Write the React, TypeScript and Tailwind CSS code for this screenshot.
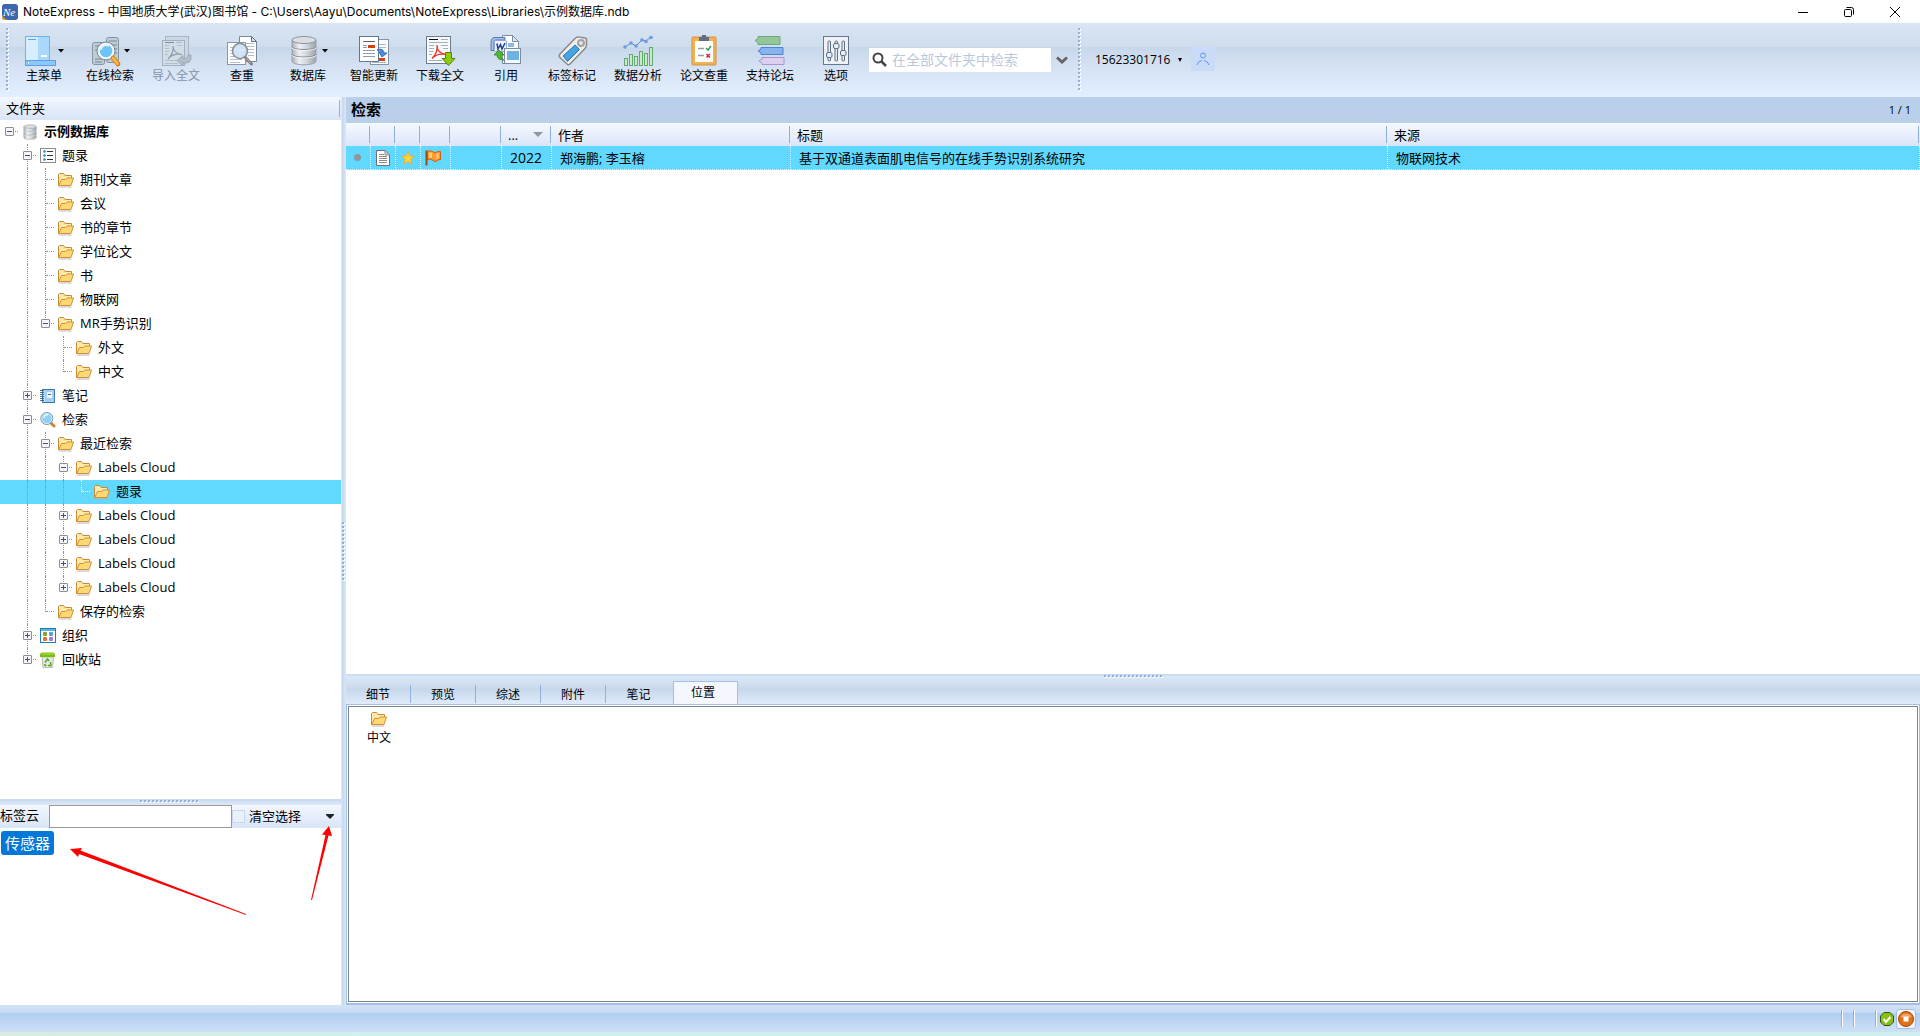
import React from "react";
import clsx from "clsx";

interface ToolItem {
    label: string;
    icon: React.ReactNode;
    hasMenu?: boolean;
    disabled?: boolean;
}

interface TreeRow {
    label: string;
    level: number;
    icon: "db" | "list" | "folder" | "note" | "search" | "group" | "trash";
    toggle?: "open" | "closed";
    // One entry per ancestor column, true when the guide runs through the row
    guides: boolean[];
    last?: boolean;
    selected?: boolean;
    bold?: boolean;
}

const Icon = ({ children }: { children: React.ReactNode }) => (
    <svg viewBox="0 0 32 32" className="size-8 shrink-0" aria-hidden="true">{children}</svg>
);

const SmallIcon = ({ children }: { children: React.ReactNode }) => (
    <svg viewBox="0 0 16 16" className="size-4 shrink-0" aria-hidden="true">{children}</svg>
);

/* Toolbar icons */

const MainMenuIcon = () => (
    <Icon>
        <rect x="1.5" y="1.5" width="24" height="24" fill="#d6eefd" stroke="#6fb3ee" />
        <rect x="14" y="2" width="11" height="23" fill="#a9d8fb" />
        <path d="M4 4.500h8" stroke="#5aa7e6" />
        <rect x="17" y="20" width="6" height="2" fill="#fff" />
        <rect x="1.5" y="25.5" width="30" height="5" fill="#8cc8fb" stroke="#5a9fe6" />
        <circle cx="4.500" cy="28" r="1.200" fill="#fff" stroke="#4f8fd8" strokeWidth=".5" />
    </Icon>
);

const OnlineSearchIcon = () => (
    <Icon>
        <rect x="2.500" y="7.500" width="12" height="22" rx="2" fill="#bfccd6" stroke="#87939f" />
        <rect x="16.500" y="2.500" width="12" height="25" rx="2" fill="#bfccd6" stroke="#87939f" />
        <path d="M5 11h7M5 15h4M5 24h7M5 27h7M19 6h8M22 10h5M24 14h3M24 18h3" stroke="#7a8793" />
        <circle cx="16" cy="16" r="7.500" fill="#6cc3f5" stroke="#f2f6f9" strokeWidth="2.500" />
        <circle cx="16" cy="16" r="9" fill="none" stroke="#75889a" strokeWidth="1" />
        <path d="M11 15a5 5 0 0 1 8-4" stroke="#dff3fd" strokeWidth="2" fill="none" />
        <path d="M23 23l5 6" stroke="#c97c16" strokeWidth="4.500" strokeLinecap="round" />
        <path d="M23 23l4.500 5.500" stroke="#ffb440" strokeWidth="3" strokeLinecap="round" />
    </Icon>
);

const ImportIcon = () => (
    <Icon>
        <rect x="5.500" y="1.500" width="23" height="25" fill="#ccd7e4" stroke="#a9b5c2" />
        <rect x="2.500" y="5.500" width="22" height="25" fill="#d3dde8" stroke="#a4b0be" />
        <path d="M5 7.500h9" stroke="#808d9c" />
        <path d="M5 10.500h4M5 13.500h4M5 16.500h4M5 19.500h3M5 25.500h13M5 28.500h13M16 7.500h6M17 10.500h5" stroke="#b3bfcc" />
        <path d="M13 11c0 4 3 8 9 8.500c-5-1-10 0-14 4.500c4-4 6-8 5-13z" fill="none" stroke="#919dac" strokeWidth="1.200" />
        <path d="M17 25.500l6-5v3h3q2-1 2-3.500h3v4q-1 4-5 4h-3v3z" fill="#b3becb" stroke="#9da9b8" />
    </Icon>
);

const CheckDupIcon = () => (
    <Icon>
        <path d="M13.500 1.500h12l5 5v20h-17z" fill="#fff" stroke="#76869b" />
        <path d="M25.500 1.500v5h5z" fill="#dbe5ef" stroke="#5f6e82" />
        <path d="M17 8.500h11M17 11.500h11M17 14.500h11M20 17.500h8M22 20.500h6" stroke="#b4bfcc" />
        <rect x="1.500" y="7.500" width="18" height="22" fill="#fff" stroke="#8a98ab" />
        <path d="M4 12.500h5M4 15.500h3M4 18.500h3M4 21.500h5M4 24.500h12M4 27.500h10" stroke="#b4bfcc" />
        <circle cx="14" cy="16" r="7.500" fill="#c6e0f8" fillOpacity=".9" stroke="#8b8c90" strokeWidth="1.500" />
        <path d="M8 15h12M14 9v14" stroke="#dcecfb" />
        <path d="M19.500 22.500l6 6.500" stroke="#7d7f84" strokeWidth="3" strokeLinecap="round" />
        <path d="M20 22.500l5 6" stroke="#c9ae98" strokeWidth="1" />
    </Icon>
);

const DatabaseShape = () => (
    <>
        <defs>
            <linearGradient id="dbMetal" x1="0" x2="1">
                <stop offset="0" stopColor="#a9b0b7" />
                <stop offset=".3" stopColor="#eef1f3" />
                <stop offset=".6" stopColor="#d2d7db" />
                <stop offset="1" stopColor="#9ba3ab" />
            </linearGradient>
        </defs>
        <path d="M4 5v21c0 5 24 5 24 0V5z" fill="url(#dbMetal)" stroke="#9aa2aa" />
        <path d="M4 11.500c0 4 24 4 24 0M4 19c0 4 24 4 24 0" fill="none" stroke="#7d8790" />
        <path d="M4 12.500c0 4 24 4 24 0M4 20c0 4 24 4 24 0" fill="none" stroke="#f5f7f8" />
        <ellipse cx="16" cy="5" rx="12" ry="3.500" fill="#dadee2" stroke="#8d959d" />
    </>
);

const SmartUpdateIcon = () => (
    <Icon>
        <rect x="12.500" y="4.500" width="18" height="25" fill="#fff" stroke="#8593a6" />
        <rect x="21" y="23" width="6" height="3" fill="#d8400f" />
        <path d="M21 9.500h7M21 12.500h7M14 27.500h14" stroke="#a9b7ca" />
        <rect x="1.500" y="1.500" width="19" height="25" fill="#fff" stroke="#66768c" />
        <path d="M5 6.500h12" stroke="#51627a" />
        <path d="M5 10.500h4M5 12.500h4M5 15.500h12M5 18.500h12M5 21.500h12" stroke="#8a9cb6" />
        <rect x="10" y="10" width="7" height="3" fill="#d8400f" />
        <path d="M19 15c4-2 7 0 7 3h3l-5 4-3-5h2c0-2-2-2-4-2z" fill="#4f90d9" stroke="#2f6fc0" />
    </Icon>
);

const DownloadIcon = () => (
    <Icon>
        <rect x="2.500" y="1.500" width="24" height="27" fill="#f8fafc" stroke="#6c7c92" />
        <path d="M5 4.500h9" stroke="#111" />
        <path d="M17 4.500h7M5 7.500h19M5 10.500h5M5 13.500h5M5 16.500h4M17 10.500h7M19 13.500h5M5 19.500h3M5 25.500h13" stroke="#a3afbf" />
        <path d="M13 10c0 5 3 9 9.500 9.500c-5-1-11 0-14.500 4c4-4 6-8 5-13.500z" fill="none" stroke="#e8372c" strokeWidth="1.300" />
        <path d="M21.500 17.500h6v6h3.500l-6.500 7-6.500-7h3.500z" fill="#8fca12" stroke="#548a05" />
    </Icon>
);

const CiteIcon = () => (
    <Icon>
        <path d="M12.500.500h10l6 6v22h-16z" fill="#fff" stroke="#7d8da3" />
        <path d="M22.500.500v6h6z" fill="#dce6f0" stroke="#7d8da3" />
        <rect x="18" y="8" width="6" height="4" fill="#8db8e4" />
        <path d="M15 2.500H5q-4 0-4 5v8h3v-9q0-1.500 2-1.500h9z" fill="#a9c0ea" stroke="#3c5fa9" strokeWidth=".8" />
        <rect x="4.500" y="5.500" width="12" height="11" rx="1" fill="#eff4fc" stroke="#8fa6d6" />
        <path d="M7 8.500l1 5.500 2.500-4.500 1.500 4.500 3-6" fill="none" stroke="#1f3f91" strokeWidth="1.500" />
        <rect x="14.500" y="13.500" width="16" height="15" fill="#f5f8fb" stroke="#7e8b9c" />
        <rect x="17" y="16" width="12" height="9" fill="#6db2e2" />
        <path d="M4 20l5-5 5 5h-3c0 3 1 4 3 5c-5 0-7-2-7-5z" fill="#52b82f" stroke="#2d8b19" strokeWidth=".8" />
    </Icon>
);

const TagIcon = () => (
    <Icon>
        <path d="M4 19L19 3.500q2-2 4-1.500l6 1q1.500 0 1.500 2v5q0 2-2 4L14 29q-1.500 1.500-3 0l-7-6.500q-1.500-1.500 0-3.500z" fill="#f1efec" stroke="#8b8885" strokeWidth="1.500" />
        <circle cx="25" cy="8" r="3" fill="#d8e4ef" stroke="#a5a29f" strokeWidth="2" />
        <path d="M7 21l12-11 4.500 4.500-12 12z" fill="#46a3dd" stroke="#2578b5" />
    </Icon>
);

const AnalysisIcon = () => (
    <Icon>
        <path d="M3 12l6-4 5 3 6-6 4 1 5-4" fill="none" stroke="#5589cf" />
        <g fill="#6d9cdb">
            <circle cx="3" cy="12" r="1.800" />
            <circle cx="9" cy="8" r="1.800" />
            <circle cx="14" cy="11" r="1.800" />
            <circle cx="20" cy="5" r="1.800" />
            <circle cx="24" cy="6.500" r="1.800" />
            <circle cx="29" cy="2.500" r="1.800" />
        </g>
        <g fill="#c7ebc4" stroke="#62aa72">
            <rect x="2.500" y="23.500" width="3" height="7" />
            <rect x="7.500" y="19.500" width="3" height="11" />
            <rect x="12.500" y="21.500" width="3" height="9" />
            <rect x="17.500" y="16.500" width="3" height="14" />
            <rect x="22.500" y="18.500" width="3" height="12" />
            <rect x="27.500" y="12.500" width="3" height="18" />
        </g>
    </Icon>
);

const PaperCheckIcon = () => (
    <Icon>
        <rect x="4" y="2" width="24" height="28" rx="1" fill="#f2b152" stroke="#d9933a" />
        <rect x="7" y="6" width="18" height="21" fill="#fff" />
        <path d="M11 2h3V0h4v2h3v4H11z" fill="#5c7089" />
        <path d="M10 13.500h6M10 20.500h6" stroke="#969ca3" strokeWidth="1.500" />
        <path d="M18 13l2 2 3-4" fill="none" stroke="#3a9b62" strokeWidth="1.500" />
        <path d="M18.500 19l3.500 3.500M22 19l-3.500 3.500" stroke="#d3243c" strokeWidth="1.500" />
    </Icon>
);

const ForumIcon = () => (
    <Icon>
        <path d="M1 5.500l3-2V1.500h22v8H4v-2z" fill="#93c79b" stroke="#6ba97b" />
        <path d="M4 16l3-2v-1.500h22v7H7V18z" fill="#86b4ee" stroke="#4c84d4" />
        <path d="M5 26l3-2v-1.500h22v7H8V28z" fill="#dccff0" stroke="#ab97cf" />
    </Icon>
);

const OptionsIcon = () => (
    <Icon>
        <rect x="3.500" y="1.500" width="25" height="28" fill="#eef2f6" stroke="#66768c" />
        <g fill="#e6edf4" stroke="#5d6f87">
            <rect x="8" y="6" width="2.500" height="20" rx="1" />
            <rect x="15" y="6" width="2.500" height="20" rx="1" />
            <rect x="22" y="6" width="2.500" height="20" rx="1" />
            <rect x="6.500" y="17.500" width="5.500" height="5" rx="1.500" />
            <rect x="13.500" y="8.500" width="5.500" height="5" rx="1.500" />
            <rect x="20.500" y="15.500" width="5.500" height="5" rx="1.500" />
        </g>
    </Icon>
);

const tools: ToolItem[] = [
    { label: "主菜单", icon: <MainMenuIcon />, hasMenu: true },
    { label: "在线检索", icon: <OnlineSearchIcon />, hasMenu: true },
    { label: "导入全文", icon: <ImportIcon />, disabled: true },
    { label: "查重", icon: <CheckDupIcon /> },
    { label: "数据库", icon: <Icon><DatabaseShape /></Icon>, hasMenu: true },
    { label: "智能更新", icon: <SmartUpdateIcon /> },
    { label: "下载全文", icon: <DownloadIcon /> },
    { label: "引用", icon: <CiteIcon /> },
    { label: "标签标记", icon: <TagIcon /> },
    { label: "数据分析", icon: <AnalysisIcon /> },
    { label: "论文查重", icon: <PaperCheckIcon /> },
    { label: "支持论坛", icon: <ForumIcon /> },
    { label: "选项", icon: <OptionsIcon /> },
];

/* Tree icons */

const FolderIcon = () => (
    <SmallIcon>
        <path d="M.5 14V2.500l1-1h4l1.500 2h6.500V6" fill="#fdeaa6" stroke="#c98a35" />
        <path d="M.5 14l3-6.500h4L9 6h6.500L13 13.500H1z" fill="#fdd873" stroke="#d2933b" />
        <path d="M1 15h12.500" stroke="#b5b5b5" />
    </SmallIcon>
);

const treeIcons: Record<TreeRow["icon"], React.ReactNode> = {
    db: <svg viewBox="1 0 30 31" className="size-4 shrink-0" aria-hidden="true"><DatabaseShape /></svg>,
    folder: <FolderIcon />,
    list: (
        <SmallIcon>
            <rect x=".5" y=".5" width="15" height="14" fill="#fff" stroke="#8c8c8c" />
            <path d="M7 3.500h6M7 7.500h6M7 11.500h6" stroke="#333" />
            <g fill="#2d86c9">
                <circle cx="4.500" cy="3.500" r="1.300" />
                <circle cx="4.500" cy="7.500" r="1.300" />
                <circle cx="4.500" cy="11.500" r="1.300" />
            </g>
        </SmallIcon>
    ),
    note: (
        <SmallIcon>
            <rect x="2.500" y="1.500" width="12" height="13" fill="#b8daf3" stroke="#3d79ad" />
            <rect x="5" y="2" width="9" height="12" fill="#a3cef0" />
            <rect x="7" y="4" width="5" height="6" fill="#eff6fb" />
            <path d="M8 6.500h3" stroke="#4b6b85" />
            <path d="M0 2.500h4M0 4.500h4M0 6.500h4M0 8.500h4M0 10.500h4M0 12.500h4" stroke="#34536b" strokeWidth=".8" />
        </SmallIcon>
    ),
    search: (
        <SmallIcon>
            <path d="M11 11l3 3" stroke="#c98634" strokeWidth="3" strokeLinecap="round" />
            <circle cx="6.800" cy="6.500" r="6" fill="#8fd0f4" stroke="#7e93a5" />
            <circle cx="6.800" cy="6.500" r="5" fill="none" stroke="#dcebf5" />
            <path d="M4 6a3 3 0 0 1 4-3" stroke="#e7f6fe" strokeWidth="1.500" fill="none" />
        </SmallIcon>
    ),
    group: (
        <SmallIcon>
            <rect x=".5" y=".5" width="15" height="14" fill="#fff" stroke="#1c7fb8" />
            <rect x="1" y="1" width="14" height="2" fill="#5db4e2" />
            <rect x="3" y="4" width="4" height="4" rx="1" fill="#80a626" />
            <rect x="9" y="4" width="4" height="4" rx="1" fill="#5c9ed8" />
            <rect x="3" y="9" width="4" height="4" rx="1" fill="#ef6b3f" />
            <rect x="9" y="9" width="4" height="4" rx="1" fill="#9c7be0" />
        </SmallIcon>
    ),
    trash: (
        <SmallIcon>
            <path d="M2 5h11.500l-1 10.500h-9.500z" fill="#e4e8e6" stroke="#b8c0bc" />
            <path d="M0 5V2.500Q0 1 2 .5h11q2 .5 2 2V5z" fill="#7bbd0f" />
            <path d="M1.500 2h12" stroke="#b4e34f" />
            <path d="M5 10.500l2.500-3.500 1.500 2M10.500 10l.500 3.500H8M6.500 13.500H5l-.500-1.500" fill="none" stroke="#58a51b" strokeWidth="1.400" />
        </SmallIcon>
    ),
};

const rows: TreeRow[] = [
    { label: "示例数据库", level: 0, icon: "db", toggle: "open", guides: [], bold: true },
    { label: "题录", level: 1, icon: "list", toggle: "open", guides: [false] },
    { label: "期刊文章", level: 2, icon: "folder", guides: [false, true] },
    { label: "会议", level: 2, icon: "folder", guides: [false, true] },
    { label: "书的章节", level: 2, icon: "folder", guides: [false, true] },
    { label: "学位论文", level: 2, icon: "folder", guides: [false, true] },
    { label: "书", level: 2, icon: "folder", guides: [false, true] },
    { label: "物联网", level: 2, icon: "folder", guides: [false, true] },
    { label: "MR手势识别", level: 2, icon: "folder", toggle: "open", guides: [false, true], last: true },
    { label: "外文", level: 3, icon: "folder", guides: [false, true, false] },
    { label: "中文", level: 3, icon: "folder", guides: [false, true, false], last: true },
    { label: "笔记", level: 1, icon: "note", toggle: "closed", guides: [false] },
    { label: "检索", level: 1, icon: "search", toggle: "open", guides: [false] },
    { label: "最近检索", level: 2, icon: "folder", toggle: "open", guides: [false, true] },
    { label: "Labels Cloud", level: 3, icon: "folder", toggle: "open", guides: [false, true, true] },
    { label: "题录", level: 4, icon: "folder", guides: [false, true, true, true], last: true, selected: true },
    { label: "Labels Cloud", level: 3, icon: "folder", toggle: "closed", guides: [false, true, true] },
    { label: "Labels Cloud", level: 3, icon: "folder", toggle: "closed", guides: [false, true, true] },
    { label: "Labels Cloud", level: 3, icon: "folder", toggle: "closed", guides: [false, true, true] },
    { label: "Labels Cloud", level: 3, icon: "folder", toggle: "closed", guides: [false, true, true], last: true },
    { label: "保存的检索", level: 2, icon: "folder", guides: [false, true], last: true },
    { label: "组织", level: 1, icon: "group", toggle: "closed", guides: [false] },
    { label: "回收站", level: 1, icon: "trash", toggle: "closed", guides: [false], last: true },
];

const TreeItem = ({ row }: { row: TreeRow }) => (
    <li
        role="treeitem"
        aria-level={row.level + 1}
        aria-selected={!!row.selected}
        aria-expanded={row.toggle ? row.toggle === "open" : undefined}
        className={clsx("flex h-6 items-center", row.selected && "bg-[#60d8ff]")}
    >
        {row.guides.map((on, i) => (
            <span key={i} className="flex h-full w-[18px] shrink-0">
                <span className={clsx("h-full w-[10px]", on && "border-r border-dotted border-[#909090]")} />
            </span>
        ))}
        <span className="relative flex h-full w-[18px] shrink-0">
            {row.level > 0 && (
                <span className={clsx("w-[10px] border-r border-dotted", row.last ? "h-3" : "h-full", row.selected ? "border-white" : "border-[#909090]")} />
            )}
            <span className={clsx("absolute top-[11px] right-0 left-[10px] border-t border-dotted", row.selected ? "border-white" : "border-[#909090]")} />
            {row.toggle && (
                <button
                    type="button"
                    aria-label={row.toggle === "open" ? "折叠" : "展开"}
                    className="absolute top-[7px] left-[5px] flex size-[9px] items-center justify-center rounded-[1px] border border-[#8e8e8e] bg-[#f6f6f6]"
                >
                    <svg viewBox="0 0 7 7" className="size-[7px]" aria-hidden="true">
                        <path d={row.toggle === "open" ? "M1 3.500h5" : "M1 3.500h5M3.500 1v5"} stroke="#3b4f9c" />
                    </svg>
                </button>
            )}
        </span>
        <button type="button" className={clsx("ml-1 flex items-center gap-[6px] text-[13px] leading-[22px] whitespace-nowrap", row.bold && "font-bold")}>
            {treeIcons[row.icon]}
            <span className="pb-[2px]">{row.label}</span>
        </button>
    </li>
);

const Caret = () => (
    <svg viewBox="0 0 6 4" className="h-1 w-[6px] shrink-0" aria-hidden="true"><path d="M0 0h6L3 3.500z" fill="#000" /></svg>
);

const GripX = () => (
    <span className="flex gap-[2px]">
        {Array.from({ length: 15 }).map((_, i) => <span key={i} className="size-[2px] bg-[#8fb0dc] shadow-[1px_1px_0_#fff]" />)}
    </span>
);

const GripY = ({ count }: { count: number }) => (
    <span className="flex flex-col gap-[2px]">
        {Array.from({ length: count }).map((_, i) => <span key={i} className="size-[2px] bg-[#8fb0dc] shadow-[1px_1px_0_#fff]" />)}
    </span>
);

const TitleBar = () => (
    <header className="flex h-[23px] items-center justify-between bg-white">
        <div className="flex items-center gap-[5px] pl-[2px]">
            <svg viewBox="0 0 16 16" className="size-4" aria-hidden="true">
                <rect width="16" height="16" rx="3" fill="#3a67b0" />
                <path d="M0 11v2q0 3 3 3h3q-4-1-6-5z" fill="#f29b2e" />
                <text x="1" y="11.500" fontSize="11" fontStyle="italic" fontFamily="Liberation Serif, serif" fill="#fff">Ne</text>
            </svg>
            <h1 className="font-['Inter','Noto_Sans_CJK_SC',sans-serif] text-xs whitespace-nowrap">NoteExpress - 中国地质大学(武汉)图书馆 - C:\Users\Aayu\Documents\NoteExpress\Libraries\示例数据库.ndb</h1>
        </div>
        <div className="flex pr-[2px]">
            <button type="button" aria-label="最小化" className="flex h-[21px] w-[46px] items-center justify-center">
                <svg viewBox="0 0 12 12" className="size-3" aria-hidden="true"><path d="M1 6.500h10" stroke="#000" /></svg>
            </button>
            <button type="button" aria-label="还原" className="flex h-[21px] w-[46px] items-center justify-center">
                <svg viewBox="0 0 12 12" className="size-3" fill="none" stroke="#000" aria-hidden="true">
                    <rect x="1.500" y="3.500" width="7" height="7" rx="1" />
                    <path d="M3.500 1.500h5q2 0 2 2v5" />
                </svg>
            </button>
            <button type="button" aria-label="关闭" className="flex h-[21px] w-[46px] items-center justify-center">
                <svg viewBox="0 0 12 12" className="size-3" aria-hidden="true"><path d="M1 1l10 10M11 1L1 11" stroke="#000" /></svg>
            </button>
        </div>
    </header>
);

const Toolbar = () => (
    <nav className="flex h-[74px] bg-[linear-gradient(#dae5f3_0,#cfdded_32%,#c7d7ea_33%,#d5e2f3_60%,#e2efff_100%)]">
        <div className="pt-[5px] pr-[3px] pl-[6px]"><GripY count={16} /></div>
        <div className="flex">
            {tools.map((tool) => (
                <button
                    key={tool.label}
                    type="button"
                    disabled={tool.disabled}
                    className={clsx("flex w-[66px] flex-col items-center pt-3 text-xs leading-[18px]", tool.disabled && "text-[#8593a6]")}
                >
                    <span className="flex items-center gap-[2px]">
                        {tool.icon}
                        {tool.hasMenu && <Caret />}
                    </span>
                    {tool.label}
                </button>
            ))}
        </div>
        <div className="mt-[25px] flex h-6 items-center">
            <label className="flex h-6 w-[182px] items-center gap-1 bg-white pl-[3px]">
                <svg viewBox="0 0 16 16" className="size-4 shrink-0" fill="none" stroke="#444" aria-hidden="true">
                    <circle cx="6" cy="6" r="4.500" strokeWidth="2" />
                    <path d="M9.500 9.500l4.500 4.500" strokeWidth="2.500" />
                </svg>
                <input type="text" aria-label="检索" placeholder="在全部文件夹中检索" className="h-6 w-full min-w-0 pb-[2px] text-sm outline-none placeholder:text-[#b9c8db]" />
            </label>
            <button type="button" aria-label="检索选项" className="flex h-6 w-[22px] items-center justify-center">
                <svg viewBox="0 0 12 8" className="h-2 w-3" aria-hidden="true"><path d="M1 1.500l5 4.500 5-4.500" fill="none" stroke="#666" strokeWidth="3" /></svg>
            </button>
        </div>
        <div className="pt-[5px] pl-[5px]"><GripY count={16} /></div>
        <div className="mt-6 ml-[15px] flex h-6 items-center">
            <button type="button" className="flex items-center gap-2 pt-[2px] text-xs">
                15623301716
                <svg viewBox="0 0 4 4" className="size-1" aria-hidden="true"><path d="M0 0h4L2 4z" fill="#000" /></svg>
            </button>
            <button type="button" aria-label="用户" className="ml-[9px] flex size-6 items-center justify-center bg-[#c9dbf7]">
                <svg viewBox="0 0 14 14" className="size-[14px]" fill="none" stroke="#5a98ee" aria-hidden="true">
                    <circle cx="7" cy="3.500" r="2.500" />
                    <path d="M1 13q1-4 5-4.500M13 13q-1-4-5-4.500" />
                </svg>
            </button>
        </div>
    </nav>
);

const TagCloud = () => (
    <section className="relative flex flex-col bg-white">
        <div className="flex h-[6px] justify-center bg-[linear-gradient(#c5d7ec,#dfeafb)] pt-[1px] pr-[3px]"><GripX /></div>
        <div className="flex h-[23px] items-center bg-[linear-gradient(#f3f7fe,#d8e4f7)] text-[13px]">
            <label htmlFor="tag-filter" className="w-[49px] shrink-0 pb-[3px] leading-5">标签云</label>
            <input id="tag-filter" type="text" className="h-[23px] w-[183px] border border-[#9a9a9a] bg-white px-1 outline-none" />
            <label className="flex items-center gap-1">
                <input type="checkbox" className="size-[13px] appearance-none border border-[#c5d8f0] bg-[#e9f0fb]" />
                清空选择
            </label>
            <button type="button" aria-label="标签菜单" className="mr-[6px] ml-auto flex h-5 w-[10px] items-center justify-center">
                <svg viewBox="0 0 8 5" className="h-[5px] w-2" aria-hidden="true"><path d="M0 0h8v1L4 5 0 1z" fill="#222" /></svg>
            </button>
        </div>
        <div className="flex-1 px-[1px] pt-[3px]">
            <button type="button" className="h-6 rounded-[3px] bg-[#0078d7] px-1 text-[15px] leading-6 text-white">传感器</button>
        </div>
        <svg viewBox="0 0 341 206" className="pointer-events-none absolute top-0 left-0 h-[206px] w-[341px]" fill="#fe0000" aria-hidden="true">
            <path d="M70 50l12-1-1.500 2.500L246 115l0 1L79 55l-1 3z" />
            <path d="M329 27l3 10-3.500-.5L312 101h-1l14.500-65-3.500-.5z" />
        </svg>
    </section>
);

const Sidebar = () => (
    <aside className="grid w-[341px] shrink-0 grid-rows-[702fr_206fr]">
        <section className="flex flex-col bg-white">
            <h2 className="flex h-[23px] items-center justify-between bg-[linear-gradient(#f3f7fe,#d8e4f7)] pr-[1px] pl-[6px] text-[13px]">
                文件夹
                <span className="h-[17px] w-[1px] bg-[#8fb0dc]" />
            </h2>
            <ul role="tree" aria-label="文件夹">
                {rows.map((row, i) => <TreeItem key={i} row={row} />)}
            </ul>
        </section>
        <TagCloud />
    </aside>
);

const headCell = "h-[23px] p-0 text-left font-normal";
const headInner = "mr-[1px] flex h-[17px] items-center border-r border-[#8fb0dc]";
const bodyCell = "h-6 border-r border-b border-dotted border-[#d9f4fd] p-0";

const ResultTable = () => (
    <table className="w-full table-fixed border-separate border-spacing-0 text-[13px] leading-5">
        <colgroup>
            <col className="w-[25px]" />
            <col className="w-[25px]" />
            <col className="w-[25px]" />
            <col className="w-[30px]" />
            <col className="w-[51px]" />
            <col className="w-[50px]" />
            <col className="w-[239px]" />
            <col className="w-[597px]" />
            <col />
        </colgroup>
        <thead className="bg-[linear-gradient(#f6f9fe,#dae5f8)]">
            <tr>
                {[0, 1, 2, 3, 4].map((i) => <th key={i} className={headCell}><div className={headInner} /></th>)}
                <th className={headCell}>
                    <div className={clsx(headInner, "justify-between pr-[7px] pl-[6px]")}>
                        ...
                        <svg viewBox="0 0 10 5" className="h-[5px] w-[10px]" aria-hidden="true"><path d="M0 0h10L5 5z" fill="#8f979f" /></svg>
                    </div>
                </th>
                <th className={headCell}><div className={clsx(headInner, "pl-[6px]")}>作者</div></th>
                <th className={headCell}><div className={clsx(headInner, "pl-[6px]")}>标题</div></th>
                <th className={headCell}><div className={clsx(headInner, "pl-[6px]")}>来源</div></th>
            </tr>
        </thead>
        <tbody>
            <tr className="bg-[#60d8ff]">
                <td className={bodyCell}><div className="ml-2 size-[7px] rounded-full bg-[#8e979e]" /></td>
                <td className={bodyCell}>
                    <svg viewBox="0 0 16 16" className="mx-auto size-4" aria-hidden="true">
                        <path d="M1.500.5H10L14.500 5v10.500h-13z" fill="#fff" stroke="#6f6f6f" />
                        <path d="M10 .5V5h4.500z" fill="#ddd" stroke="#8a8a8a" />
                        <path d="M4 4.500h5M4 6.500h8M4 8.500h8M4 10.500h8M4 12.500h8" stroke="#8c8c8c" />
                    </svg>
                </td>
                <td className={bodyCell}>
                    <svg viewBox="0 0 14 14" className="mx-auto size-[14px]" aria-hidden="true">
                        <path d="M7 .5l1.800 4.500 4.700.3-3.600 3 1.200 4.900L7 10.600 2.900 13.200l1.200-4.900-3.600-3 4.700-.3z" fill="#ffd234" stroke="#e9a93c" strokeWidth=".8" />
                    </svg>
                </td>
                <td className={bodyCell}>
                    <svg viewBox="0 0 16 16" className="ml-1 size-4" aria-hidden="true">
                        <path d="M1.500.5v15" stroke="#9c4a12" strokeWidth="2" />
                        <path d="M2.500 1.500q3-1.500 5 0t3 1q2-1 5-1v8q-3 0-4 1.500t-4-1-5 0z" fill="#ff9d2b" stroke="#cf5a10" />
                        <path d="M4 3q2-1 3 0v5q-2-1-3 0zM11.500 4q1-1 2-1v5l-2 1z" fill="#ffd08a" />
                    </svg>
                </td>
                <td className={bodyCell} />
                <td className={clsx(bodyCell, "pr-[9px] text-right text-sm")}>2022</td>
                <td className={clsx(bodyCell, "pl-2")}>郑海鹏; 李玉榕</td>
                <td className={clsx(bodyCell, "pl-2")}>基于双通道表面肌电信号的在线手势识别系统研究</td>
                <td className={clsx(bodyCell, "pl-2")}>物联网技术</td>
            </tr>
        </tbody>
    </table>
);

const detailTabs = ["细节", "预览", "综述", "附件", "笔记", "位置"];

const DetailPane = () => (
    <section className="flex flex-col bg-[#e3eefc]">
        <div className="bg-[linear-gradient(#c5d7ec_0,#dbe7f6_10%,#cddcee_40%,#c7d7ea_50%,#dfebfb_100%)]">
            <div className="flex h-[7px] justify-center pt-[1px]"><GripX /></div>
            <div role="tablist" className="flex h-[23px] text-xs">
                {detailTabs.map((tab, i) => {
                    const active = tab === "位置";
                    return (
                        <button
                            key={tab}
                            type="button"
                            role="tab"
                            aria-selected={active}
                            className={clsx(
                                "flex w-[65px] items-center justify-center",
                                active ? "ml-[2px] rounded-t-[1px] border border-b-0 border-[#a3c0ea] bg-[#f4f8fe] pr-[5px]" : "pt-[2px]",
                            )}
                        >
                            <span className={clsx("flex h-[18px] w-full items-center justify-center", !active && "pt-[2px]", i < 4 && "border-r border-[#8fb0dc]")}>{tab}</span>
                        </button>
                    );
                })}
            </div>
        </div>
        <div className="flex flex-1 flex-col border border-b-2 border-[#a3c0ea] bg-white p-[1px]">
            <div role="tabpanel" className="flex-1 border border-[#7f8590] bg-white pt-1 pl-[18px]">
                <button type="button" className="flex w-6 flex-col items-center gap-[2px] text-xs leading-[18px] whitespace-nowrap">
                    <FolderIcon />
                    中文
                </button>
            </div>
        </div>
    </section>
);

const StatusBar = () => (
    <footer>
        <div className="flex h-[27px] items-center justify-end bg-[linear-gradient(#d3e2f8_0,#c6dbf6_28%,#b0cef2_30%,#cfe0f6_100%)] pr-1">
            <span className="mr-[10px] h-[17px] w-[2px] border-r border-l border-r-white border-l-[#8fb0dc]" />
            <span className="mr-5 h-[17px] w-[2px] border-r border-l border-r-white border-l-[#8fb0dc]" />
            <span className="mr-[3px] h-[17px] w-[2px] border-r border-l border-r-white border-l-[#8fb0dc]" />
            <button type="button" aria-label="已完成" className="mr-[2px]">
                <svg viewBox="0 0 14 14" className="size-[14px]" aria-hidden="true">
                    <path d="M4 .5h6L13.500 4v6L10 13.500H4L.5 10V4z" fill="#8ac016" stroke="#2b5a0c" />
                    <path d="M3.500 7l2.500 3 4.500-5" fill="none" stroke="#fff" strokeWidth="2" />
                </svg>
            </button>
            <button type="button" aria-label="停止" className="flex size-5 items-center justify-center rounded-[3px] border border-[#a9bcd8] bg-[#f1f5fc]">
                <svg viewBox="0 0 16 16" className="size-4" aria-hidden="true">
                    <circle cx="8" cy="8" r="7.500" fill="#e2711a" stroke="#a5480c" />
                    <path d="M2.500 6a6 6 0 0 1 11 0q-5 2-11 0z" fill="#f4a566" />
                    <rect x="5.500" y="5.500" width="5" height="5" fill="#fff" />
                </svg>
            </button>
        </div>
        <div className="h-1 bg-[linear-gradient(90deg,#d9ecdf,#cdf0ef_20%)]" />
    </footer>
);

const App = () => (
    <div className="flex min-h-screen flex-col bg-white font-['Open_Sans','Noto_Sans_CJK_SC',sans-serif] text-black">
        <TitleBar />
        <Toolbar />
        <main className="flex flex-1">
            <Sidebar />
            <div className="flex w-[5px] shrink-0 flex-col justify-center bg-[linear-gradient(90deg,#dfeafa,#c5d8f0_40%,#dce8f9)] pl-[1px]"><GripY count={15} /></div>
            <div className="grid min-w-0 flex-1 grid-rows-[577fr_331fr]">
                <section className="bg-white">
                    <div className="flex h-[26px] items-center justify-between bg-[#bad0ea] pr-[9px] pl-[5px]">
                        <h2 className="pb-[2px] text-[15px] font-bold">检索</h2>
                        <span className="text-[11px]">1 / 1</span>
                    </div>
                    <ResultTable />
                </section>
                <DetailPane />
            </div>
        </main>
        <StatusBar />
    </div>
);

export default App;
